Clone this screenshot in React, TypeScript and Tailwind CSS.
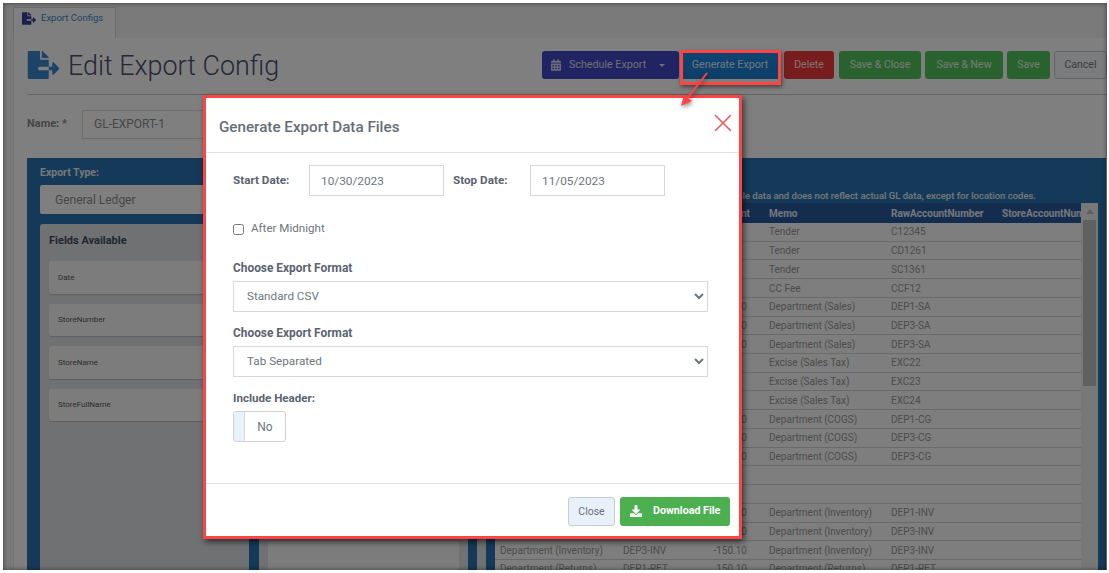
import { FaCalendarAlt, FaDownload, FaFileExport } from "react-icons/fa"
import { X } from "lucide-react"

const fields = ["Date", "StoreNumber", "StoreName", "StoreFullName"]

const rows = [
  ["Cash", "1000", "", "Tender", "C12345"],
  ["Credit Card", "1010", "", "Tender", "CD1261"],
  ["Store Credit", "1020", "", "Tender", "SC1361"],
  ["Credit Card Fee", "6100", "", "CC Fee", "CCF12"],
  ["Department (Sales)", "DEP1-SA", "-250.10", "Department (Sales)", "DEP1-SA"],
  ["Department (Sales)", "DEP3-SA", "-250.10", "Department (Sales)", "DEP3-SA"],
  ["Department (Sales)", "DEP3-SA", "-250.10", "Department (Sales)", "DEP3-SA"],
  ["Excise (Sales Tax)", "EXC22", "", "Excise (Sales Tax)", "EXC22"],
  ["Excise (Sales Tax)", "EXC23", "", "Excise (Sales Tax)", "EXC23"],
  ["Excise (Sales Tax)", "EXC24", "", "Excise (Sales Tax)", "EXC24"],
  ["Department (COGS)", "DEP1-CG", "150.10", "Department (COGS)", "DEP1-CG"],
  ["Department (COGS)", "DEP3-CG", "150.10", "Department (COGS)", "DEP3-CG"],
  ["Department (COGS)", "DEP3-CG", "150.10", "Department (COGS)", "DEP3-CG"],
  ["", "", "", "", ""],
  ["", "", "", "", ""],
  ["Department (Inventory)", "DEP1-INV", "-150.10", "Department (Inventory)", "DEP1-INV"],
  ["Department (Inventory)", "DEP3-INV", "-150.10", "Department (Inventory)", "DEP3-INV"],
  ["Department (Inventory)", "DEP3-INV", "-150.10", "Department (Inventory)", "DEP3-INV"],
  ["Department (Returns)", "DEP1-RET", "150.10", "Department (Returns)", "DEP1-RET"],
]

export default function App() {
  return (
    <div className="relative w-[1109px] h-[573px] bg-white overflow-hidden font-['Roboto',sans-serif]">
      <div className="absolute inset-0 pl-[3px] pt-[3px] pr-[2px] pb-[3px]">
        <div className="relative h-full overflow-hidden bg-[#f4f4f4] flex flex-col">
          {/* Tab bar */}
          <div className="h-[35px] shrink-0 pt-[4px] pl-[10px]">
            <div className="w-[103px] h-[31px] bg-white border border-b-0 border-[#d8d8d8] rounded-t-[2px] flex items-center pl-[8px] gap-[5px] pb-[9px]">
              <FaFileExport className="text-[#3a3f9a] w-[14px] h-[13px]" />
              <span className="text-[9.5px] text-[#3f88cc]">Export Configs</span>
            </div>
          </div>

          <div className="flex-1 ml-[10px] bg-white border-l border-[#e4e4e4] flex flex-col min-h-0">
            {/* Page title and actions */}
            <div className="h-[57px] shrink-0 ml-[13px] border-b border-[#c8c8c8] flex">
              <div className="flex items-center">
                <FaFileExport className="text-[#3a86cc] w-[33px] h-[28px] mb-[2px]" />
                <h1 className="ml-[8px] text-[26.9px] font-light text-[#4a5070] leading-none mt-[1px]">Edit Export Config</h1>
              </div>
              <div className="ml-auto flex gap-[4px] pt-[13px] h-[41px] text-[10.5px]">
                <div className="w-[137px] h-[28px] -mr-[3px] bg-[#4048c4] rounded-[3px] flex items-center pl-[9px] text-white/80">
                  <FaCalendarAlt className="w-[10px] h-[12px] mr-[8px]" />
                  <span className="text-[10.7px]">Schedule Export</span>
                  <span className="ml-[13px] w-0 h-0 border-x-[3px] border-x-transparent border-t-[3px] border-t-white/80" />
                </div>
                <div className="w-[100px] h-[28px] bg-gradient-to-b from-[#1f8ae6] to-[#1a7ccf] flex items-center justify-center text-[10.7px] text-white/85">Generate Export</div>
                <div className="w-[50px] h-[28px] mr-[1px] bg-[#f03a3a] rounded-[3px] flex items-center justify-center text-white/85">Delete</div>
                <div className="w-[82px] h-[28px] bg-[#55c45f] rounded-[3px] flex items-center justify-center text-white/85">Save &amp; Close</div>
                <div className="w-[78px] h-[28px] bg-[#55c45f] rounded-[3px] flex items-center justify-center text-white/85">Save &amp; New</div>
                <div className="w-[43px] h-[28px] bg-[#55c45f] rounded-[3px] flex items-center justify-center text-white/85">Save</div>
                <div className="w-[53px] h-[28px] bg-[#f4f8fc] border border-[#c4cad0] rounded-[3px] flex items-center justify-center text-[#7c7c7c]">Cancel</div>
              </div>
            </div>

            {/* Name row */}
            <div className="h-[63px] shrink-0 ml-[13px] flex items-center pb-[4px]">
              <span className="w-[55px] text-[11px] font-bold text-[#8a8a8a] -mt-[1px]">Name: *</span>
              <div className="w-[200px] h-[29px] border border-[#dcdcdc] bg-white flex items-center pl-[11px] pb-[1px] text-[12px] text-[#8e8e8e]">GL-EXPORT-1</div>
            </div>

            {/* Blue panel */}
            <div className="flex-1 min-h-0 ml-[13px] mr-[1px] bg-[#2a72b0] flex overflow-hidden">
              <div className="w-[209px] ml-[13px] shrink-0 flex flex-col">
                <div className="h-[27px] pt-[10px] text-[10.5px] font-bold text-white/90 leading-none">Export Type:</div>
                <div className="h-[29px] bg-white rounded-[2px] flex items-center pl-[15px] text-[12px] text-[#8e8e8e]">General Ledger</div>
                <div className="flex-1 mt-[10px] bg-[#e0e2e6] rounded-t-[3px] px-[9px] pt-[10px]">
                  <div className="text-[11px] font-bold text-[#444c5c] leading-none h-[26px] pt-[1px]">Fields Available</div>
                  <div className="flex flex-col gap-[10px] pt-[1px]">
                    {fields.map((f) => (
                      <div key={f} className="h-[32.5px] bg-[#f8f8f8] rounded-[2px] shadow-[0_1px_1px_rgba(0,0,0,0.15)] flex items-center pl-[9px] pt-[1px] text-[8px] text-[#5a5a5a]">
                        {f}
                      </div>
                    ))}
                  </div>
                </div>
              </div>

              <div className="w-[209px] ml-[10px] shrink-0 mt-[66px] bg-[#e0e2e6] px-[9px] pt-[10px] flex flex-col gap-[10px]">
                <div className="h-[280px]" />
                <div className="h-[32px] bg-[#f8f8f8] rounded-[2px]" />
                <div className="h-[32px] bg-[#f8f8f8] rounded-[2px]" />
              </div>

              <div className="w-[9px] ml-[9px] shrink-0 mt-[66px] bg-[#e0e2e6]" />

              <div className="flex-1 min-w-0 ml-[9px] mr-[8px] flex flex-col">
                <div className="h-[45px] shrink-0 pr-[62px] flex items-end justify-end pb-[3px] text-[9.5px] font-medium text-white/90 leading-none">
                  The preview contains sample data and does not reflect actual GL data, except for location codes.
                </div>
                <div className="flex-1 min-h-0 flex">
                  <div className="flex-1 min-w-0 bg-[#fcfcfc] overflow-hidden text-[10px] text-[#9a9a9a]">
                    <div className="h-[20px] bg-[#285a9e] flex items-center pl-[5px] text-white/90 font-bold whitespace-nowrap overflow-hidden">
                      <span className="w-[123px] shrink-0">Account</span>
                      <span className="w-[60px] shrink-0">Number</span>
                      <span className="w-[67px] shrink-0 text-right">Amount</span>
                      <span className="w-[122px] shrink-0 ml-[19px]">Memo</span>
                      <span className="w-[111px] shrink-0">RawAccountNumber</span>
                      <span className="shrink-0">StoreAccountNumber</span>
                    </div>
                    {rows.map((r, i) => (
                      <div key={i} className="h-[18.73px] border-b border-[#d4d4d4] flex items-center pl-[5px] whitespace-nowrap">
                        <span className="w-[123px] shrink-0">{r[0]}</span>
                        <span className="w-[60px] shrink-0">{r[1]}</span>
                        <span className="w-[64px] shrink-0 text-right">{r[2]}</span>
                        <span className="w-[122px] shrink-0 ml-[22px]">{r[3]}</span>
                        <span className="w-[111px] shrink-0">{r[4]}</span>
                      </div>
                    ))}
                  </div>
                  <div className="w-[17px] shrink-0 bg-[#f0f0f0] flex flex-col items-center">
                    <div className="h-[17px] flex items-center">
                      <span className="w-0 h-0 border-x-[4px] border-x-transparent border-b-[5px] border-b-[#c0c0c0]" />
                    </div>
                    <div className="w-[13px] h-[166px] bg-[#c0c0c0]" />
                  </div>
                </div>
              </div>
            </div>
          </div>

          {/* Backdrop */}
          <div className="absolute inset-0 bg-black/50 shadow-[inset_0_0_5px_rgba(0,0,0,0.5)]" />
        </div>
      </div>

      {/* Highlight around Generate Export */}
      <div className="absolute left-[680px] top-[50px] w-[101px] h-[35px] border-[3px] border-[#ff4444] shadow-[1px_2px_4px_rgba(0,0,0,0.5)]" />

      {/* Modal */}
      <div className="absolute left-[203px] top-[95px] w-[539px] h-[444px] border-[3px] border-[#ff4444] bg-white shadow-[2px_3px_6px_rgba(0,0,0,0.6)] flex flex-col text-[#5b6370]">
        <div className="h-[55px] shrink-0 border-b border-[#e2e2e2] flex items-center justify-between pl-[13px] pr-[1px] pt-[4px]">
          <h2 className="text-[15.2px] font-medium text-[#666d79]">Generate Export Data Files</h2>
          <X className="w-[30px] h-[30px] text-[#e85a5a] mb-[8px]" strokeWidth={1.2} />
        </div>

        <div className="flex-1 pl-[27px] pr-[31px] pt-[12px]">
          <div className="flex items-start h-[31px]">
            <label className="w-[76px] pt-[10px] text-[11.7px] font-bold leading-none">Start Date:</label>
            <input readOnly value="10/30/2023" className="w-[135px] h-[31px] border border-[#d8d8d8] pl-[11px] text-[11.8px] text-[#6e7580] outline-none" />
            <label className="w-[77px] ml-[9px] pt-[10px] text-[11.7px] font-bold leading-none">Stop Date:</label>
            <input readOnly value="11/05/2023" className="w-[135px] h-[31px] border border-[#d8d8d8] pl-[11px] text-[11.8px] text-[#6e7580] outline-none" />
          </div>

          <div className="flex items-center h-[20px] mt-[23px]">
            <input type="checkbox" className="w-[11px] h-[11px] m-0" />
            <span className="ml-[7px] text-[11.6px] text-[#6e7580]">After Midnight</span>
          </div>

          <div className="mt-[22px] text-[11.9px] font-bold leading-none h-[20px] pt-[2px]">Choose Export Format</div>
          <select className="block w-[475px] h-[31px] border border-[#d8d8d8] bg-white pl-[9px] pb-[2px] text-[11.7px] text-[#6e7580] outline-none">
            <option>Standard CSV</option>
          </select>

          <div className="mt-[14px] text-[11.9px] font-bold leading-none h-[20px] pt-[2px]">Choose Export Format</div>
          <select className="block w-[475px] h-[31px] border border-[#d8d8d8] bg-white pl-[9px] pb-[2px] text-[11.7px] text-[#6e7580] outline-none">
            <option>Tab Separated</option>
          </select>

          <div className="mt-[15px] text-[11.6px] font-bold leading-none h-[19px] pt-[1px]">Include Header:</div>
          <div className="w-[53px] h-[31px] border border-[#d0d0d0] rounded-[3px] flex overflow-hidden">
            <div className="w-[11px] bg-[#e8f2fb] border-r border-[#d8d8d8]" />
            <div className="flex-1 flex items-center justify-center text-[12px] text-[#6e7580]">No</div>
          </div>
        </div>

        <div className="h-[53px] shrink-0 border-t border-[#e2e2e2] flex items-start justify-end gap-[5px] pt-[13px] pr-[9px]">
          <button className="w-[47px] h-[29px] bg-[#e8f1fa] border border-[#c5ccd3] rounded-[3px] text-[10.5px] text-[#6a7280]">Close</button>
          <button className="w-[110px] h-[29px] bg-[#4caf50] rounded-[3px] flex items-center pl-[10px] pb-[1px] text-[10.7px] font-bold text-white">
            <FaDownload className="w-[12px] h-[12px] mr-[11px]" />
            Download File
          </button>
        </div>
      </div>

      {/* Callout arrow */}
      <svg className="absolute left-[675px] top-[70px] w-[40px] h-[40px] overflow-visible drop-shadow-[1px_2px_2px_rgba(0,0,0,0.45)]" viewBox="0 0 40 40" fill="none">
        <path d="M32 3 L11 30" stroke="#ff4444" strokeWidth="2" />
        <path d="M6 36 L17 31 L9 25 Z" fill="#ff4444" />
      </svg>
    </div>
  )
}
